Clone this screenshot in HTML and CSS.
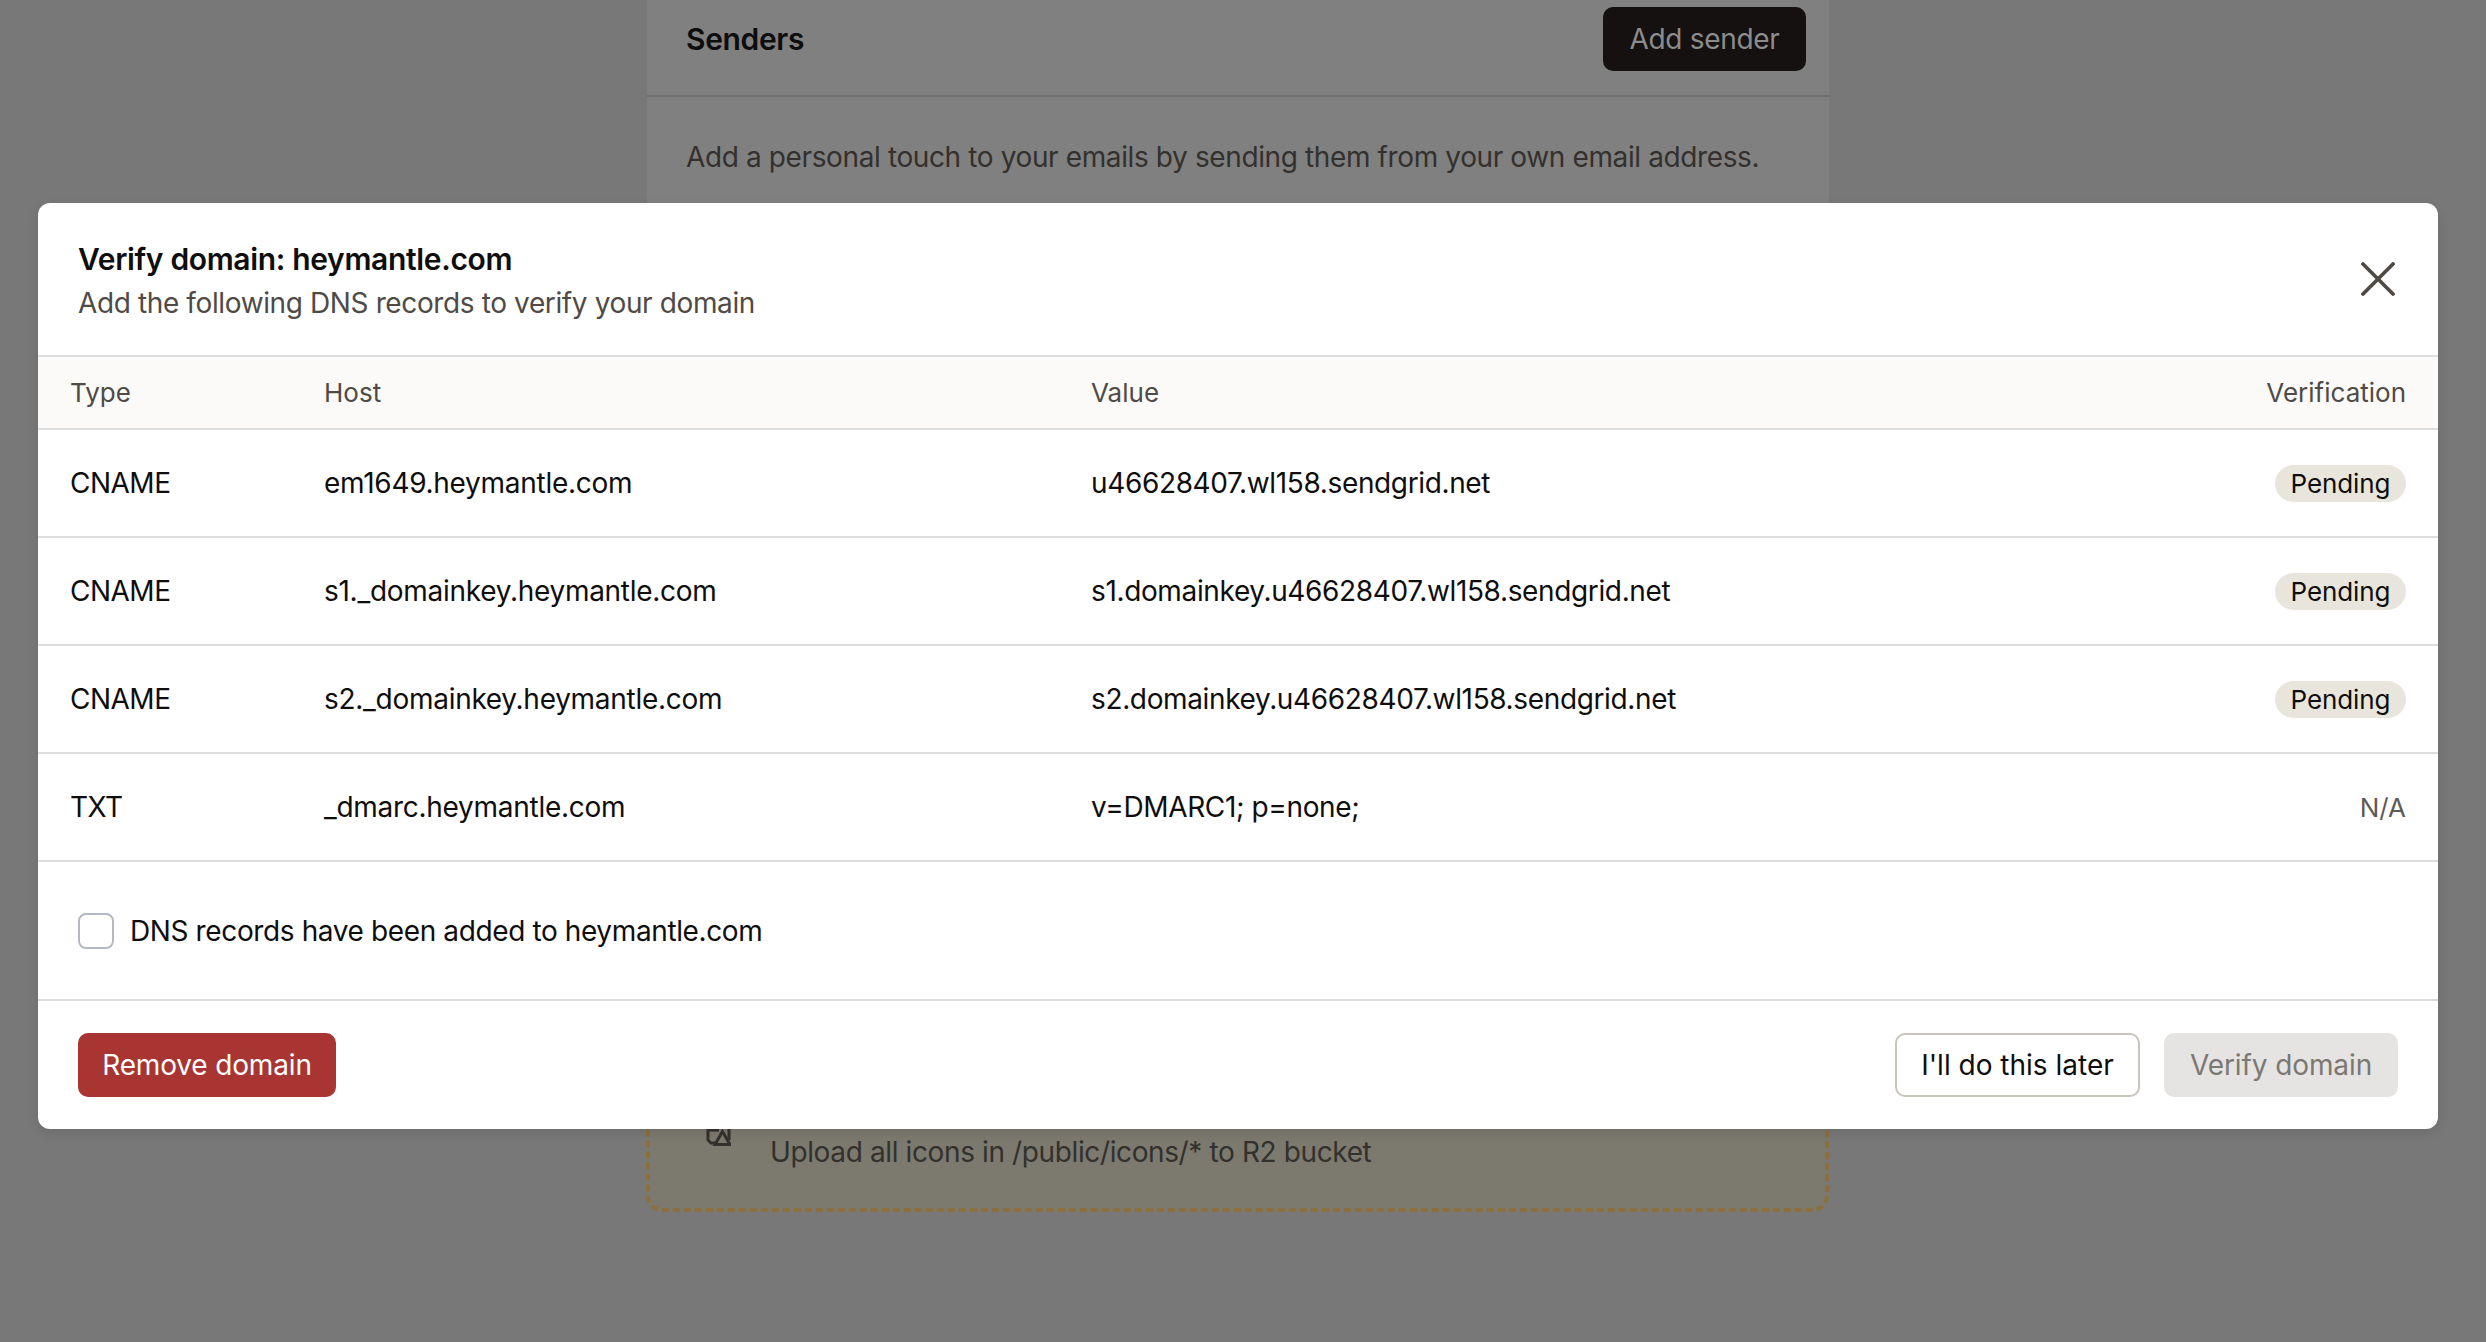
FILE: index.html
```html
<!DOCTYPE html>
<html>
<head>
    <title>Verify domain</title>
    <meta name="viewport" content="width=device-width, initial-scale=1">
    <link rel="stylesheet" href="styles.css">
</head>
<body>
    <div class="page">
        <section class="card">
            <div class="card-header">
                <h2>Senders</h2>
                <button class="add-button">Add sender</button>
            </div>
            <p class="card-text">Add a personal touch to your emails by sending them from your own email address.</p>
        </section>
        <section class="todo-card">
            <svg class="todo-border" width="1183" height="212" fill="none" stroke="#8c6f3e" stroke-width="4" stroke-dasharray="7 4">
                <rect x="2" y="2" width="1179" height="208" rx="14"/>
            </svg>
            <svg class="todo-icon" width="26" height="26" viewBox="0 0 26 26" fill="none" stroke="#33312d" stroke-width="3">
                <path d="M14 9H3v10l3 3h5"/>
                <path d="M10 23.500l7.500-13 7.500 13z"/>
                <path d="M24 8v11"/>
            </svg>
            <span>Upload all icons in /public/icons/* to R2 bucket</span>
        </section>
    </div>

    <div class="modal">
        <div class="modal-header">
            <div class="modal-title">
                <h1>Verify domain: heymantle.com</h1>
                <p>Add the following DNS records to verify your domain</p>
            </div>
            <svg class="close-icon" width="34" height="34" viewBox="0 0 34 34" fill="none" stroke="#4f4a46" stroke-width="3.8" stroke-linecap="round">
                <path d="M2 2l30 30"/>
                <path d="M32 2L2 32"/>
            </svg>
        </div>
        <table class="dns-table">
            <thead>
                <tr>
                    <th class="col-type">Type</th>
                    <th class="col-host">Host</th>
                    <th>Value</th>
                    <th class="right">Verification</th>
                </tr>
            </thead>
            <tbody>
                <tr>
                    <td class="cell-type">CNAME</td>
                    <td>em1649.heymantle.com</td>
                    <td class="cell-value">u46628407.wl158.sendgrid.net</td>
                    <td class="right"><span class="badge">Pending</span></td>
                </tr>
                <tr>
                    <td class="cell-type">CNAME</td>
                    <td>s1._domainkey.heymantle.com</td>
                    <td class="cell-value">s1.domainkey.u46628407.wl158.sendgrid.net</td>
                    <td class="right"><span class="badge">Pending</span></td>
                </tr>
                <tr>
                    <td class="cell-type">CNAME</td>
                    <td>s2._domainkey.heymantle.com</td>
                    <td class="cell-value">s2.domainkey.u46628407.wl158.sendgrid.net</td>
                    <td class="right"><span class="badge">Pending</span></td>
                </tr>
                <tr>
                    <td class="cell-type">TXT</td>
                    <td>_dmarc.heymantle.com</td>
                    <td class="cell-value">v=DMARC1; p=none;</td>
                    <td class="right muted">N/A</td>
                </tr>
            </tbody>
        </table>
        <label class="confirm">
            <span class="checkbox"></span>
            DNS records have been added to heymantle.com
        </label>
        <div class="modal-footer">
            <button class="btn btn-danger">Remove domain</button>
            <div class="footer-right">
                <button class="btn btn-plain">I'll do this later</button>
                <button class="btn btn-disabled">Verify domain</button>
            </div>
        </div>
    </div>
</body>
</html>
```

FILE: styles.css
```css
* {
    box-sizing: border-box;
}
html, body {
    height: 100%;
}
body {
    margin: 0;
    overflow: hidden;
    background: #787878;
    font-family: Inter, "Liberation Sans", sans-serif;
    font-size: 28px;
    letter-spacing: -0.38px;
    color: #0f0e0d;
}
h1, h2, p {
    margin: 0;
}
button {
    font-family: inherit;
    font-size: 28px;
}

/* page behind the overlay */
.page {
    width: 1186px;
    margin-left: 645px;
}
.card {
    height: 1000px;
    background: #808080;
    border: solid #787878;
    border-width: 0 2px;
}
.card-header {
    display: flex;
    justify-content: space-between;
    align-items: flex-start;
    height: 97px;
    padding: 7px 23px 0 39px;
    border-bottom: 2px solid #6f6f6f;
}
.card-header h2 {
    font-size: 30px;
    font-weight: 600;
    line-height: 64px;
    letter-spacing: -0.34px;
    color: #0d0d0d;
}
.add-button {
    width: 203px;
    height: 64px;
    border: none;
    border-radius: 10px;
    background: #141110;
    color: #8c8c8c;
    letter-spacing: -0.3px;
}
.card-text {
    padding: 40px 39px;
    line-height: 40px;
    color: #33302d;
}
.todo-card {
    position: relative;
    display: flex;
    align-items: flex-start;
    gap: 39px;
    width: 1183px;
    height: 212px;
    margin-left: 1px;
    padding: 132px 0 0 59px;
    background: #7c796f;
    border-radius: 16px;
    line-height: 40px;
    color: #33312d;
}
.todo-border {
    position: absolute;
    left: 0;
    top: 0;
}
.todo-icon {
    margin-top: -11px;
    flex-shrink: 0;
}

/* modal */
.modal {
    position: absolute;
    left: 38px;
    top: 203px;
    width: 2400px;
    height: 926px;
    display: flex;
    flex-direction: column;
    background: #fff;
    border-radius: 12px;
    box-shadow: 0 4px 12px rgba(0, 0, 0, 0.1);
    overflow: hidden;
}
.modal-header {
    display: flex;
    justify-content: space-between;
    align-items: center;
    height: 152px;
    padding: 0 40px;
}
.modal-title {
    align-self: flex-start;
    padding-top: 36px;
}
.modal-header h1 {
    font-size: 30px;
    font-weight: 600;
    line-height: 40px;
    letter-spacing: -0.34px;
    color: #0f0e0d;
}
.modal-header p {
    margin-top: 4px;
    line-height: 40px;
    color: #4f4a46;
}
.close-icon {
    display: block;
    margin-right: 3px;
}
.dns-table {
    width: 100%;
    border-collapse: collapse;
    table-layout: fixed;
    border-top: 2px solid #dddddd;
}
.dns-table th {
    height: 73px;
    padding: 0 32px;
    background: #fbfaf8;
    border-bottom: 2px solid #dddddd;
    font-size: 26px;
    font-weight: 400;
    letter-spacing: 0;
    text-align: left;
    color: #4f4a46;
}
.dns-table td {
    height: 108px;
    padding: 0 32px;
    border-bottom: 2px solid #dddddd;
    letter-spacing: -0.28px;
    color: #0f0e0d;
}
.dns-table .cell-type {
    letter-spacing: -0.5px;
}
.dns-table .cell-value {
    letter-spacing: -0.36px;
}
.col-type {
    width: 254px;
}
.col-host {
    width: 767px;
}
.dns-table .right {
    text-align: right;
}
.dns-table .muted {
    font-size: 26px;
    letter-spacing: 0;
    color: #5f5a55;
}
.badge {
    display: inline-block;
    width: 131px;
    height: 37px;
    border-radius: 19px;
    background: #e8e6dc;
    font-size: 26px;
    letter-spacing: -0.1px;
    line-height: 37px;
    text-align: center;
    vertical-align: middle;
}
.confirm {
    display: flex;
    align-items: center;
    gap: 16px;
    height: 139px;
    padding-left: 40px;
    border-bottom: 2px solid #dddddd;
}
.checkbox {
    width: 36px;
    height: 36px;
    border: 2px solid #b4b8c4;
    border-radius: 8px;
}
.modal-footer {
    flex: 1;
    display: flex;
    justify-content: space-between;
    align-items: center;
    padding: 0 40px;
}
.footer-right {
    display: flex;
    gap: 24px;
}
.btn {
    height: 64px;
    padding: 0;
    border: none;
    border-radius: 10px;
}
.btn-danger {
    width: 258px;
    background: #a83531;
    color: #fff;
    letter-spacing: -0.15px;
}
.btn-plain {
    width: 245px;
    background: #fff;
    border: 2px solid #c9c4bd;
    color: #0f0e0d;
}
.btn-disabled {
    width: 234px;
    background: #e5e4e2;
    color: #7b7873;
    letter-spacing: -0.1px;
}
```
